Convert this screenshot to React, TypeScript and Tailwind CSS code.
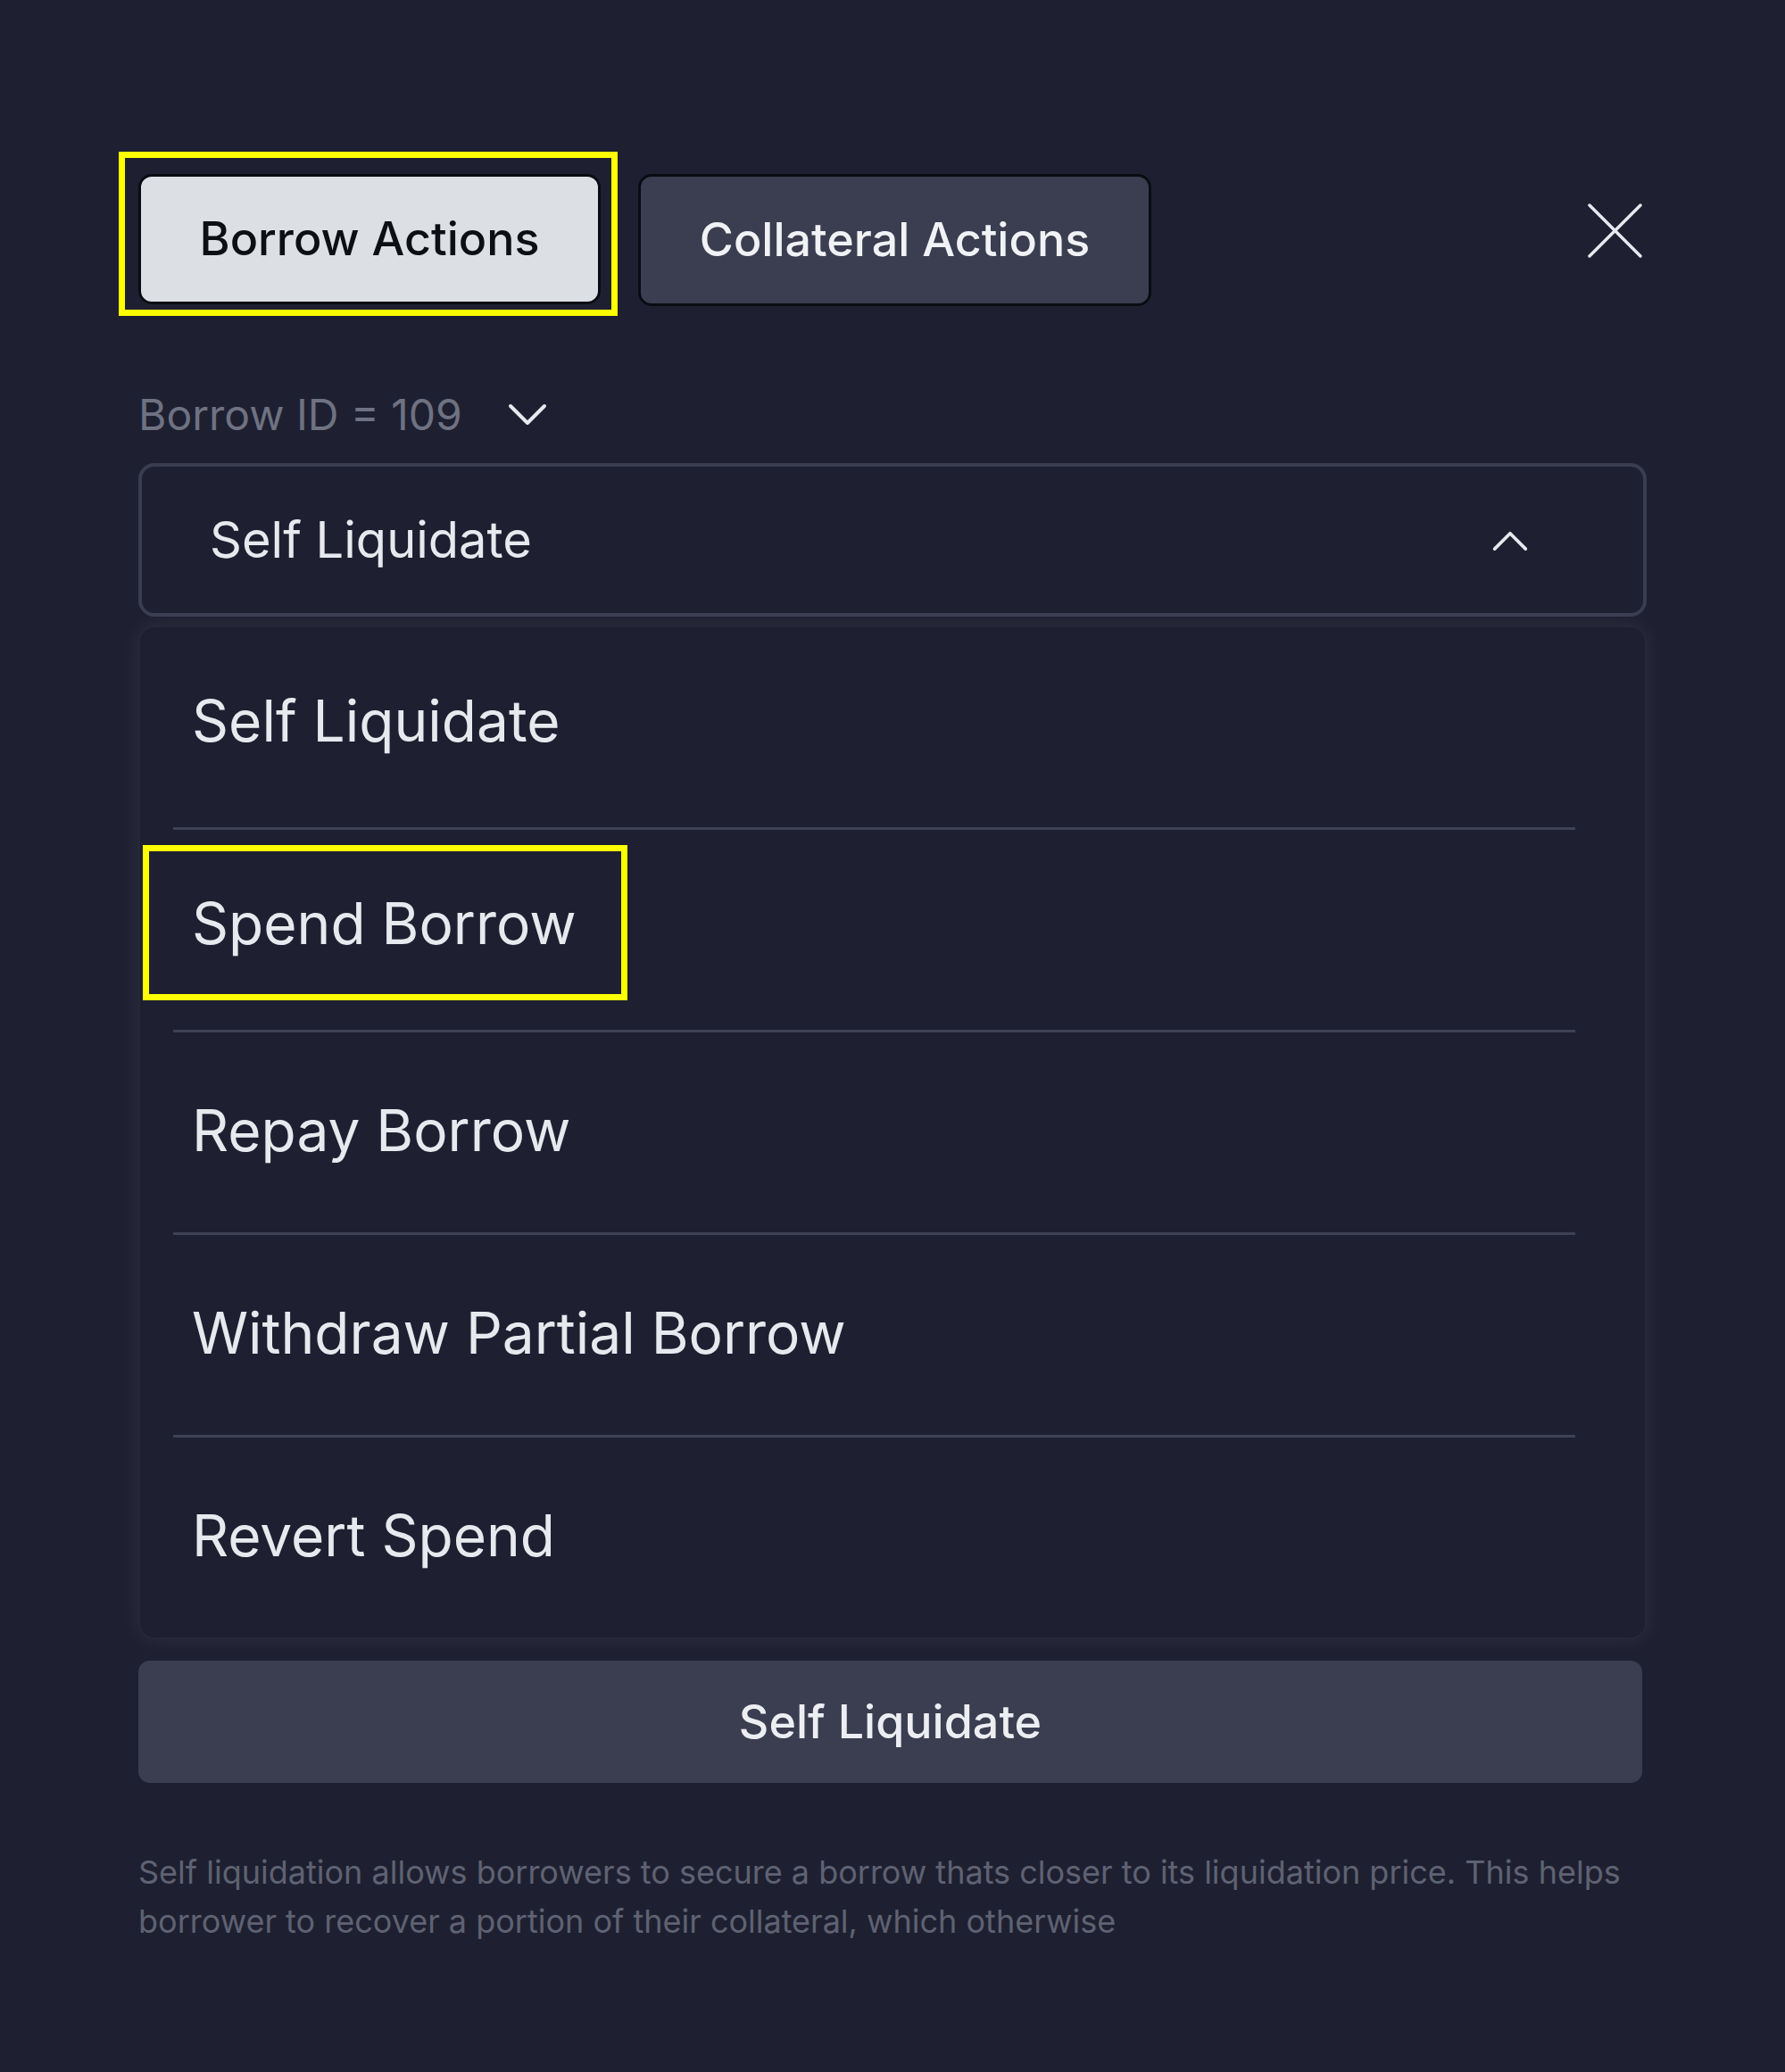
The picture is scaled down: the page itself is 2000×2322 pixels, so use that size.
import { useState } from "react";

const actions = ["Self Liquidate", "Spend Borrow", "Repay Borrow", "Withdraw Partial Borrow", "Revert Spend"];

function Chevron({ up = false, className = "" }: { up?: boolean; className?: string }) {
  return (
    <svg viewBox="0 0 46 29" className={className} fill="none" stroke="currentColor" strokeWidth={4} strokeLinecap="round" strokeLinejoin="round">
      {up ? <polyline points="4,25 23,6 42,25" /> : <polyline points="4,5 23,24 42,5" />}
    </svg>
  );
}

export default function App() {
  const [selected] = useState("Self Liquidate");

  return (
    <div className="min-h-[2322px] w-full bg-[#1e2031] font-['Inter','Noto_Sans',sans-serif] text-[#e8e9ee]">
      <div className="px-[155px] pt-[195px]">
        {/* Tabs */}
        <div className="flex items-start">
          <div className="relative">
            <button className="h-[146px] w-[518px] rounded-[15px] border-[3px] border-[#0b0c12] bg-[#dcdfe4] text-[52px] font-medium text-[#0d0f14]">
              Borrow Actions
            </button>
            <div className="pointer-events-none absolute -left-[22px] -right-[19px] -top-[25px] -bottom-[13px] border-[7px] border-[#ffff00]" />
          </div>
          <button className="ml-[42px] h-[148px] w-[575px] rounded-[15px] border-[3px] border-[#0b0c12] bg-[#3b3d50] text-[52px] font-medium text-[#f1f2f5]">
            Collateral Actions
          </button>
          <button className="ml-auto mr-[5px] mt-[33px] text-[#e8e9ee]">
            <svg viewBox="0 0 61 61" className="h-[61px] w-[61px]" stroke="currentColor" strokeWidth={3.5} strokeLinecap="round">
              <line x1="2" y1="2" x2="59" y2="59" />
              <line x1="59" y1="2" x2="2" y2="59" />
            </svg>
          </button>
        </div>

        {/* Borrow ID */}
        <div className="mt-[93px] flex h-[57px] items-center">
          <span className="text-[48px] leading-none text-[#6f7282]">Borrow ID = 109</span>
          <Chevron className="ml-[50px] h-[29px] w-[46px] text-[#e8e9ee]" />
        </div>

        {/* Select */}
        <div className="mt-[26px] flex h-[172px] items-center justify-between rounded-[18px] border-[4px] border-[#3a3d50] pl-[76px] pr-[128px]">
          <span className="text-[56px]">{selected}</span>
          <Chevron up className="h-[27px] w-[42px] text-[#e8e9ee]" />
        </div>

        {/* Options panel */}
        <div className="mt-[10px] rounded-[18px] border-[2px] border-[#262838] bg-[#1e2031] shadow-[0_0_26px_rgba(255,255,255,0.07)]">
          {actions.map((a, i) => (
            <div key={a}>
              <div className={`flex h-[224px] items-center pl-[58px] ${i < 2 ? "pb-[14px]" : "pb-[4px]"}`}>
                <span className="relative text-[64px]">
                  {a}
                  {a === "Spend Borrow" && (
                    <span className="pointer-events-none absolute -left-[55px] -right-[57px] -top-[40px] -bottom-[38px] border-[7px] border-[#ffff00]" />
                  )}
                </span>
              </div>
              {i < actions.length - 1 && <div className="ml-[37px] mr-[78px] h-[3px] bg-[#3f4254]" />}
            </div>
          ))}
        </div>

        {/* Action button */}
        <button className="mt-[24px] h-[137px] w-[1685px] rounded-[13px] bg-[#3b3d50] text-[52px] font-medium text-[#eceef2]">
          Self Liquidate
        </button>

        <p className="mt-[73px] text-[36px] leading-[55px] text-[#5f6272]">
          Self liquidation allows borrowers to secure a borrow thats closer to its liquidation price. This helps borrower to recover a portion of their collateral, which otherwise
        </p>
      </div>
    </div>
  );
}
